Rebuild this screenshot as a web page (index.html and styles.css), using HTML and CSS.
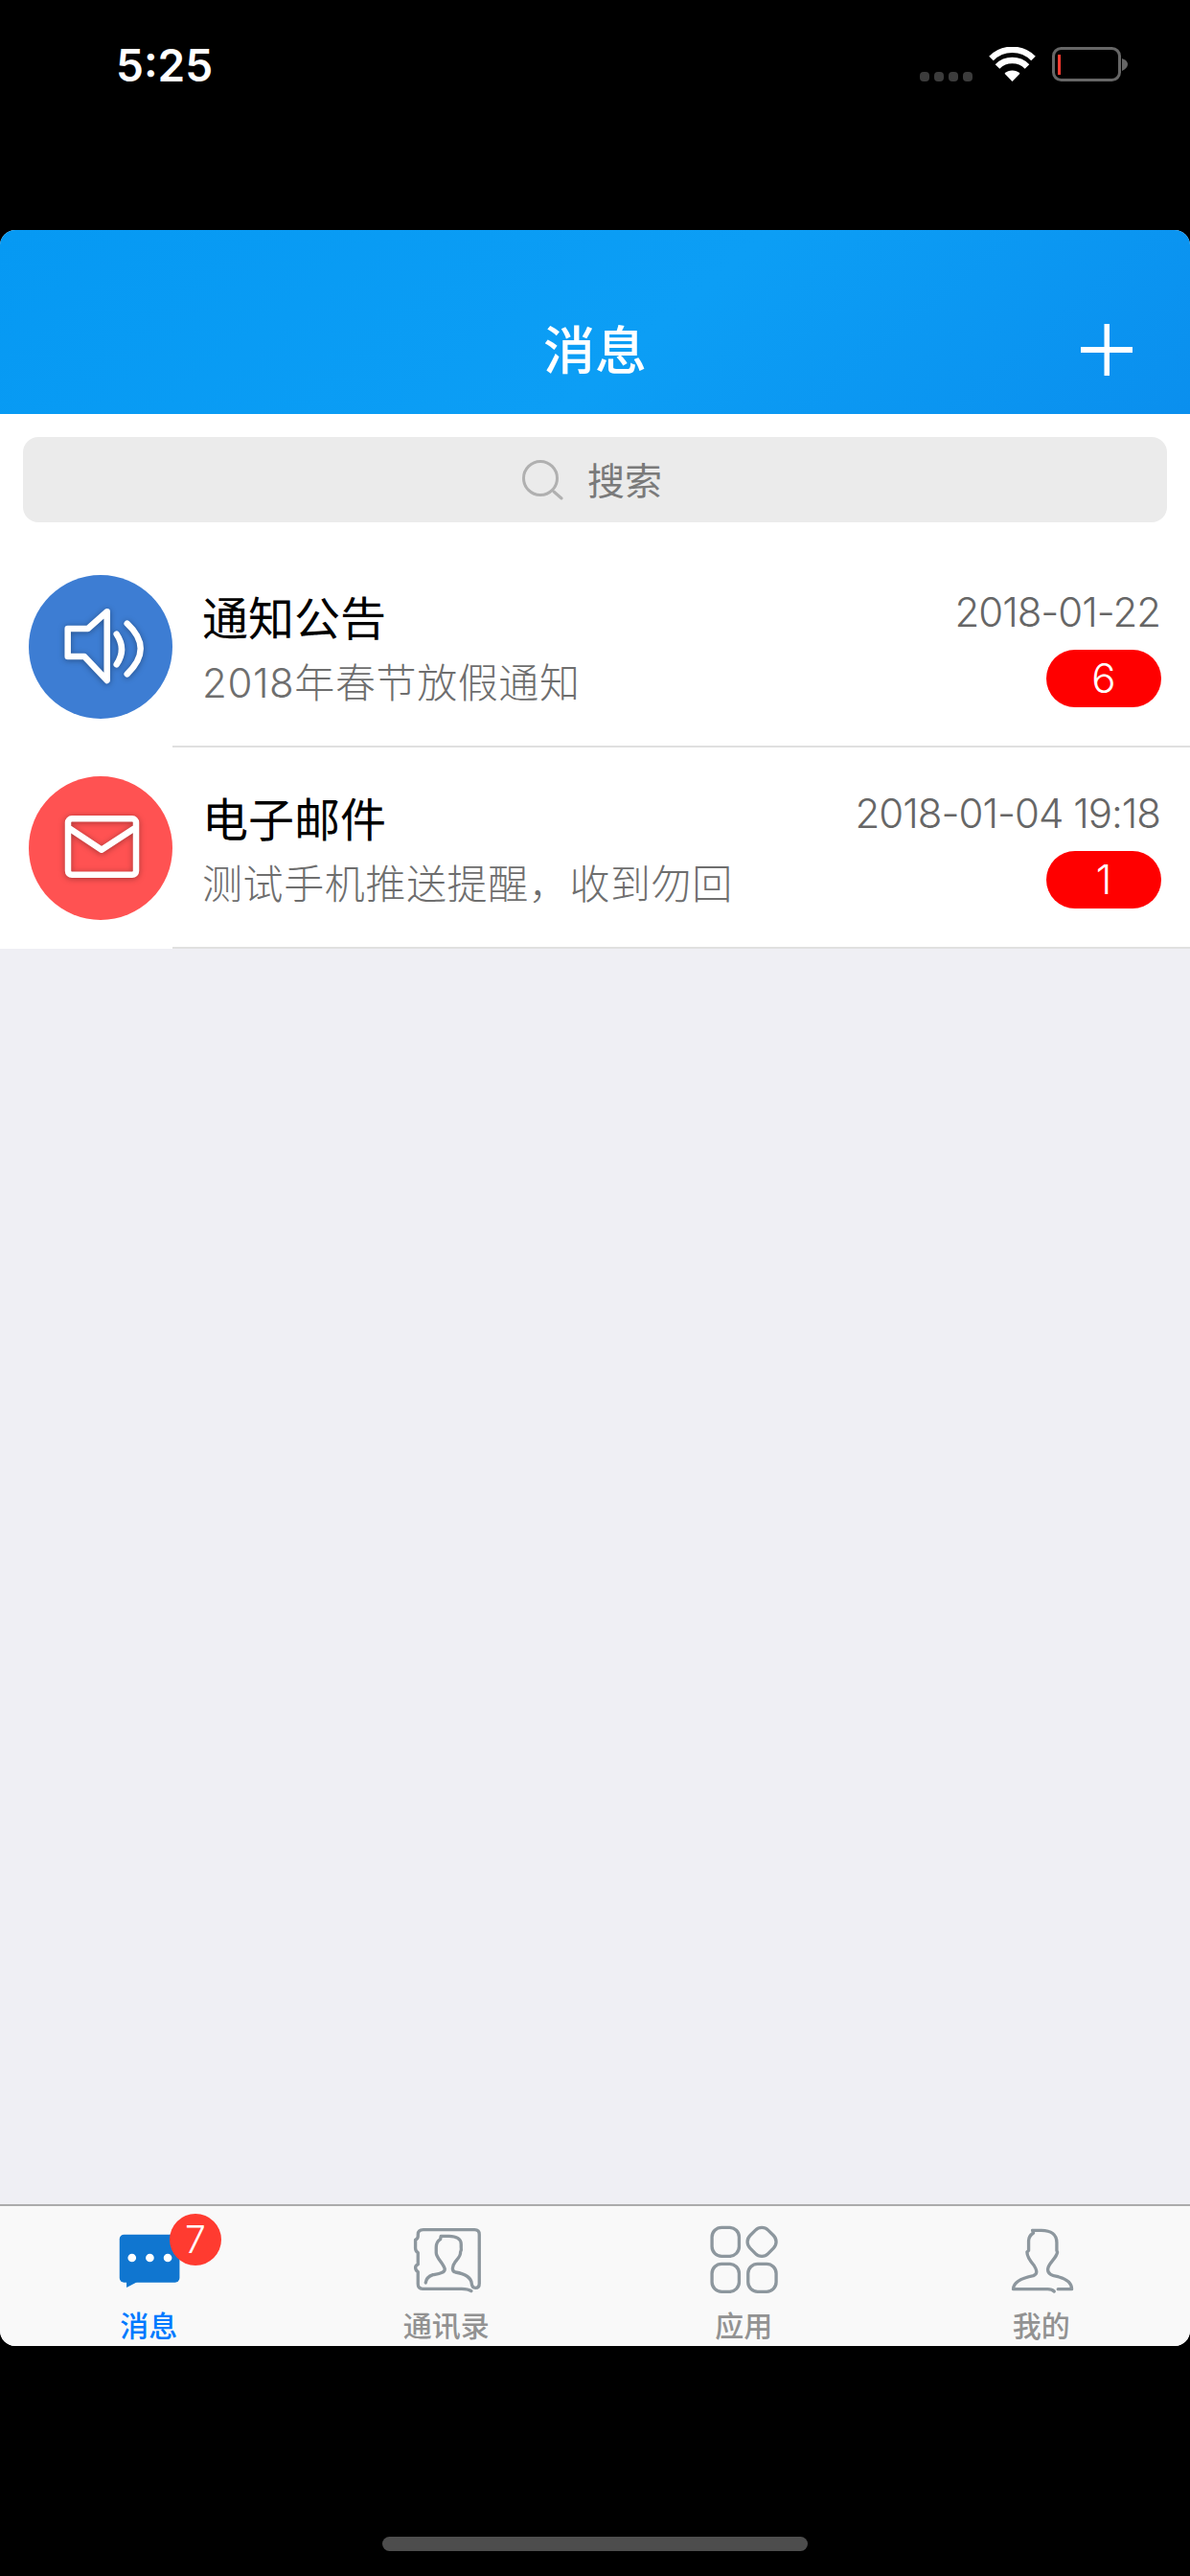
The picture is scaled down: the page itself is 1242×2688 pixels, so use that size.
FILE: index.html
```html
<!DOCTYPE html>
<html lang="zh-CN">
<head>
<meta charset="utf-8">
<title>消息</title>
<link rel="stylesheet" href="styles.css">
</head>
<body>
<div class="statusbar">
  <span class="time">5:25</span>
  <div class="status-icons">
    <svg class="signal" viewBox="0 0 55 10"><rect x="0" width="10" height="10" rx="4"/><rect x="15" width="10" height="10" rx="4"/><rect x="30" width="10" height="10" rx="4"/><rect x="45" width="10" height="10" rx="4"/></svg>
    <svg class="wifi" viewBox="0 0 49 36"><path d="M24.500 36 L16.500 27.800 A11.500 11.500 0 0 1 32.500 27.800 Z" fill="#fff"/><path d="M9 20.500 A22 22 0 0 1 40 20.500" fill="none" stroke="#fff" stroke-width="6.500"/><path d="M2.500 12 A31 31 0 0 1 46.500 12" fill="none" stroke="#fff" stroke-width="6.500"/></svg>
    <svg class="battery" viewBox="0 0 79 36"><rect x="1.500" y="1.500" width="69" height="33" rx="8" fill="none" stroke="#666" stroke-width="3"/><rect x="6" y="8" width="3" height="21" fill="#ff3b30"/><path d="M73 12 Q79 14 79 18 Q79 22 73 25 Z" fill="#666"/></svg>
  </div>
</div>

<main class="panel">
  <header class="navbar">
    <h1 class="nav-title">消息</h1>
    <svg class="nav-plus" viewBox="0 0 54 54"><path d="M24.500 0h5.500v24h24v6h-24v24h-5.500v-24H0v-6h24.500z" fill="#fff"/></svg>
  </header>

  <div class="search-wrap">
    <div class="search">
      <svg class="search-icon" viewBox="0 0 44 42"><circle cx="19" cy="19" r="17.500" fill="none" stroke="#b0b0b0" stroke-width="3"/><path d="M33 33 L41 40" stroke="#b0b0b0" stroke-width="3" stroke-linecap="round"/></svg>
      <span class="search-text">搜索</span>
    </div>
  </div>

  <ul class="list">
    <li class="row">
      <svg class="avatar" viewBox="0 0 150 150">
        <circle cx="75" cy="75" r="75" fill="#3d7dd3"/>
        <g class="glyph" fill="none" stroke="#fff" stroke-width="6.500" stroke-linecap="round" stroke-linejoin="round">
          <path d="M81.700 38.300 L61.700 56 H40.700 V85 H58 L81.700 110 Z"/>
          <path d="M91.700 61.700 Q102.300 77.500 91.700 93.300"/>
          <path d="M102.700 50.700 Q130.700 76.700 102.700 103.300"/>
        </g>
      </svg>
      <div class="row-body">
        <div class="row-top"><span class="row-title">通知公告</span><span class="row-date">2018-01-22</span></div>
        <div class="row-bottom"><span class="row-sub">2018年春节放假通知</span><span class="count">6</span></div>
      </div>
    </li>
    <li class="row">
      <svg class="avatar" viewBox="0 0 150 150">
        <circle cx="75" cy="75" r="75" fill="#ff5252"/>
        <g class="glyph" fill="none" stroke="#fff" stroke-width="6.500" stroke-linecap="round" stroke-linejoin="round">
          <rect x="41" y="44.300" width="71" height="58.500" rx="4"/>
          <path d="M43.300 55 L76 76.700 L109.300 55"/>
        </g>
      </svg>
      <div class="row-body">
        <div class="row-top"><span class="row-title">电子邮件</span><span class="row-date">2018-01-04 19:18</span></div>
        <div class="row-bottom"><span class="row-sub">测试手机推送提醒，收到勿回</span><span class="count">1</span></div>
      </div>
    </li>
  </ul>

  <nav class="tabbar">
    <div class="tab tab-active">
      <svg class="tab-icon" viewBox="39.750 78 252 252"><rect x="75" y="125" width="188" height="150" rx="14" fill="#1076d0"/><path d="M97 270 V291 L130 274 Z" fill="#1076d0"/><circle cx="114" cy="198" r="13" fill="#fff"/><circle cx="170" cy="198" r="13" fill="#fff"/><circle cx="226" cy="198" r="13" fill="#fff"/></svg>
      <span class="tab-label">消息</span>
      <span class="tab-badge">7</span>
    </div>
    <div class="tab">
      <svg class="tab-icon line" viewBox="41.250 48 252 252"><path d="M245 272 Q235 265 215 265 H92 Q78 265 78 250 V212 Q70 207 70 198 Q70 192 78 188 V152 Q70 147 70 138 V112 Q78 108 78 100 V95 Q78 80 95 80 H255 Q270 80 270 95 V248 Q270 262 258 262 Q247 262 246 248 C244 228 225 218 195 213 C183 210 184 195 195 180 C205 168 212 162 211 150 Q215 145 213 135 V125 C213 110 200 100 175 100 L150 100 L148 110 Q135 118 135 135 V152 C135 168 158 185 162 203 C162 216 140 218 125 221 Q104 228 102 246"/></svg>
      <span class="tab-label">通讯录</span>
    </div>
    <div class="tab">
      <svg class="tab-icon line" viewBox="972.750 48 252 252"><rect x="1000" y="73" width="85" height="90" rx="30"/><rect x="1116" y="78" width="80" height="80" rx="28" transform="rotate(45 1156 118)"/><rect x="1000" y="187" width="85" height="87" rx="30"/><rect x="1113" y="187" width="88" height="87" rx="30"/></svg>
      <span class="tab-label">应用</span>
    </div>
    <div class="tab">
      <svg class="tab-icon line" viewBox="44.250 48 252 252"><path d="M210 273 Q203 266 190 266 H82 C82 245 105 232 145 224 C160 218 155 205 147 192 C135 178 125 165 125 150 L130 145 V115 Q130 100 145 90 L142 82 H170 C200 82 218 95 218 120 V145 L220 150 C218 170 190 185 190 205 C190 222 210 224 225 228 C250 235 265 248 265 266 H222"/></svg>
      <span class="tab-label">我的</span>
    </div>
  </nav>
</main>

<div class="home-area"><span class="home-bar"></span></div>
</body>
</html>
```

FILE: styles.css
```css
* { box-sizing: border-box; }
html, body { margin: 0; padding: 0; }
body {
  width: 1242px;
  height: 2688px;
  background: #000;
  overflow: hidden;
  font-family: "Noto Sans CJK SC", "Noto Sans", sans-serif;
  display: flex;
  flex-direction: column;
}

/* status bar */
.statusbar {
  height: 240px;
  flex: none;
  display: flex;
  justify-content: space-between;
  align-items: flex-start;
  padding: 42px 65px 0 121px;
}
.time {
  font-family: Inter, "Liberation Sans", sans-serif;
  font-weight: 600;
  font-size: 46px;
  line-height: 52px;
  color: #fff;
}
.status-icons {
  display: flex;
  align-items: flex-end;
  margin-top: 7px;
}
.signal { width: 55px; height: 10px; fill: #3c3c3c; }
.wifi { width: 49px; height: 36px; margin-left: 17px; }
.battery { width: 79px; height: 36px; margin-left: 17px; }

/* panel */
.panel {
  height: 2208px;
  flex: none;
  background: #efeff4;
  border-radius: 16px;
  overflow: hidden;
  display: flex;
  flex-direction: column;
}
.navbar {
  height: 192px;
  flex: none;
  background: linear-gradient(140deg, #0699f3 0%, #0c9ef5 55%, #0a8fee 100%);
  display: flex;
  justify-content: center;
  align-items: flex-end;
  position: relative;
  padding-bottom: 34px;
}
.nav-title {
  margin: 0;
  font-size: 54px;
  line-height: 70px;
  font-weight: 500;
  color: #fff;
}
.nav-plus {
  position: absolute;
  left: 1128px;
  top: 98px;
  width: 54px;
  height: 54px;
}

/* search */
.search-wrap {
  background: #fff;
  padding: 24px 24px 25px;
  flex: none;
}
.search {
  height: 89px;
  border-radius: 16px;
  background: #ebebeb;
  display: flex;
  align-items: center;
  justify-content: center;
  gap: 24px;
  padding-right: 6px;
}
.search-icon { width: 44px; height: 42px; }
.search-text {
  font-size: 39px;
  color: #7a7a7a;
  line-height: 50px;
  margin-top: -3px;
}

/* list */
.list {
  list-style: none;
  margin: 0;
  padding: 0;
  background: #fff;
  flex: none;
}
.row {
  height: 210px;
  display: flex;
  padding-left: 30px;
}
.avatar {
  width: 150px;
  height: 150px;
  flex: none;
  margin-top: 30px;
}
.glyph { filter: drop-shadow(0 1px 3px rgba(0, 0, 0, .35)); }
.row-body {
  flex: 1;
  min-width: 0;
  padding: 37px 30px 0 31px;
  border-bottom: 2px solid #e0e0e0;
}
.row-top, .row-bottom {
  display: flex;
  justify-content: space-between;
  align-items: flex-start;
}
.row-top { height: 72px; }
.row-title {
  font-size: 48px;
  line-height: 70px;
  color: #000;
}
.row-date {
  font-family: Inter, "Noto Sans CJK SC", sans-serif;
  font-size: 42px;
  line-height: 60px;
  font-weight: 300;
  color: #666;
  margin-top: 2px;
  margin-right: 1px;
  letter-spacing: -1px;
}
.row-sub {
  font-family: Inter, "Noto Sans CJK SC", sans-serif;
  font-size: 42px;
  line-height: 68px;
  font-weight: 300;
  color: #6e6e6e;
  letter-spacing: .6px;
}
.count {
  width: 120px;
  height: 60px;
  margin-top: -1px;
  border-radius: 30px;
  background: #f00;
  color: #fff;
  font-family: Inter, "Noto Sans", sans-serif;
  font-size: 42px;
  line-height: 60px;
  text-align: center;
  font-weight: 300;
}

/* tab bar */
.tabbar {
  margin-top: auto;
  height: 148px;
  flex: none;
  background: #f9f9f9;
  border-top: 2px solid #ababab;
  display: grid;
  grid-template-columns: repeat(4, 1fr);
  position: relative;
}
.tab {
  position: relative;
  display: flex;
  flex-direction: column;
  align-items: center;
  padding-top: 14px;
}
.tab-icon { width: 84px; height: 84px; flex: none; }
.line {
  fill: none;
  stroke: #8d979e;
  stroke-width: 10;
  stroke-linecap: round;
  stroke-linejoin: round;
}
.tab-label {
  font-size: 30px;
  line-height: 36px;
  margin-top: 7px;
  font-weight: 500;
  color: #929292;
}
.tab-active .tab-label { color: #007aff; }
.tab-badge {
  position: absolute;
  left: 177px;
  top: 8px;
  width: 54px;
  height: 54px;
  border-radius: 50%;
  background: #ff3b30;
  color: #fff;
  font-family: Inter, "Noto Sans", sans-serif;
  font-size: 39px;
  font-weight: 300;
  line-height: 54px;
  text-align: center;
}

/* home indicator */
.home-area {
  flex: 1;
  display: flex;
  justify-content: center;
  padding-top: 199px;
}
.home-bar {
  width: 444px;
  height: 15px;
  border-radius: 8px;
  background: #4d4d4d;
}
```
